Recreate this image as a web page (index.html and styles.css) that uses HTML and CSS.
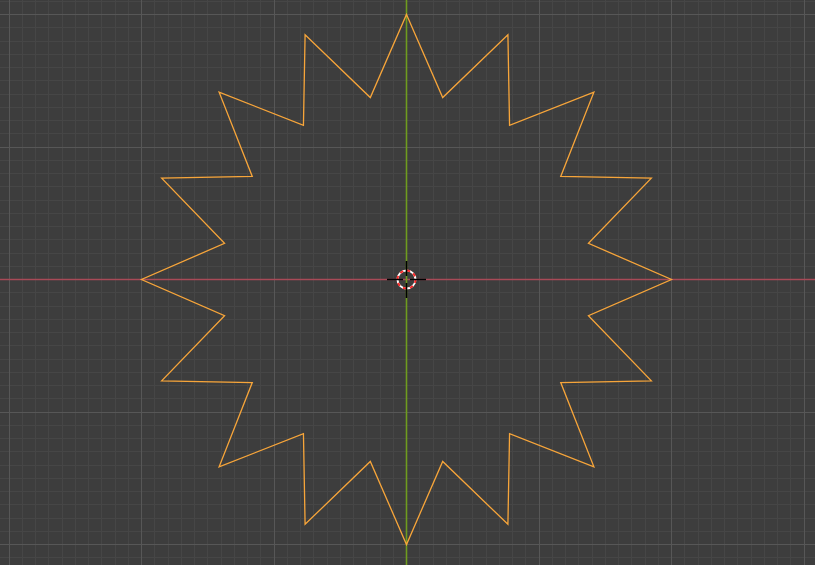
FILE: index.html
```html
<!DOCTYPE html>
<html lang="en">
<head>
<meta charset="utf-8">
<title>Viewport</title>
<link rel="stylesheet" href="styles.css">
</head>
<body>
<div class="viewport">
  <svg class="canvas" width="815" height="565" viewBox="0 0 815 565" xmlns="http://www.w3.org/2000/svg">
    <!-- minor grid -->
    <path class="grid-minor" d="
      M22.5 0V565 M35.5 0V565 M48.5 0V565 M62.5 0V565 M75.5 0V565 M88.5 0V565 M101.5 0V565 M115.5 0V565 M128.5 0V565
      M154.5 0V565 M168.5 0V565 M181.5 0V565 M194.5 0V565 M207.5 0V565 M221.5 0V565 M234.5 0V565 M247.5 0V565 M260.5 0V565
      M287.5 0V565 M300.5 0V565 M313.5 0V565 M327.5 0V565 M340.5 0V565 M353.5 0V565 M366.5 0V565 M380.5 0V565 M393.5 0V565
      M419.5 0V565 M433.5 0V565 M446.5 0V565 M459.5 0V565 M472.5 0V565 M486.5 0V565 M499.5 0V565 M512.5 0V565 M525.5 0V565
      M552.5 0V565 M565.5 0V565 M578.5 0V565 M592.5 0V565 M605.5 0V565 M618.5 0V565 M631.5 0V565 M645.5 0V565 M658.5 0V565
      M684.5 0V565 M698.5 0V565 M711.5 0V565 M724.5 0V565 M737.5 0V565 M751.5 0V565 M764.5 0V565 M777.5 0V565 M790.5 0V565
      M0 1.5H815 M0 27.5H815 M0 41.5H815 M0 54.5H815 M0 67.5H815 M0 80.5H815 M0 94.5H815 M0 107.5H815 M0 120.5H815 M0 133.5H815
      M0 160.5H815 M0 173.5H815 M0 186.5H815 M0 200.5H815 M0 213.5H815 M0 226.5H815 M0 239.5H815 M0 253.5H815 M0 266.5H815
      M0 292.5H815 M0 306.5H815 M0 319.5H815 M0 332.5H815 M0 345.5H815 M0 359.5H815 M0 372.5H815 M0 385.5H815 M0 398.5H815
      M0 425.5H815 M0 438.5H815 M0 451.5H815 M0 465.5H815 M0 478.5H815 M0 491.5H815 M0 504.5H815 M0 518.5H815 M0 531.5H815
      M0 557.5H815"/>
    <!-- major grid -->
    <path class="grid-major" d="
      M9.5 0V565 M141.5 0V565 M274.5 0V565 M539.5 0V565 M671.5 0V565 M804.5 0V565
      M0 14.5H815 M0 147.5H815 M0 412.5H815 M0 544.5H815"/>
    <!-- axes -->
    <path class="axis-x" d="M0 279.5H815"/>
    <path class="axis-y" d="M406.5 0V565"/>
    <!-- star outline -->
    <polygon class="star" points="
      406.5,14.5 442.69,97.56 507.91,34.67 509.56,125.26 593.88,92.12 560.74,176.44
      651.33,178.09 588.44,243.31 671.5,279.5 588.44,315.69 651.33,380.91 560.74,382.56
      593.88,466.88 509.56,433.74 507.91,524.33 442.69,461.44 406.5,544.5 370.31,461.44
      305.09,524.33 303.44,433.74 219.12,466.88 252.26,382.56 161.67,380.91 224.56,315.69
      141.5,279.5 224.56,243.31 161.67,178.09 252.26,176.44 219.12,92.12 303.44,125.26
      305.09,34.67 370.31,97.56"/>
    <!-- 3D cursor -->
    <circle class="cursor-ring" cx="406.5" cy="279.5" r="9"/>
    <circle class="cursor-dash" cx="406.5" cy="279.5" r="9"/>
    <path class="cursor-cross" d="M387 279.5H403 M410 279.5H426 M406.5 261V276 M406.5 283V298"/>
  </svg>
</div>
</body>
</html>
```

FILE: styles.css
```css
html, body {
  margin: 0;
  padding: 0;
  background: #3d3d3d;
  overflow: hidden;
}

.viewport {
  width: 815px;
  height: 565px;
  background: #3d3d3d;
}

.canvas {
  display: block;
}

.grid-minor {
  fill: none;
  stroke: #464646;
  stroke-width: 1;
  shape-rendering: crispEdges;
}

.grid-major {
  fill: none;
  stroke: #575757;
  stroke-width: 1;
  shape-rendering: crispEdges;
}

.axis-x {
  fill: none;
  stroke: #a84a57;
  stroke-width: 1.6;
}

.axis-y {
  fill: none;
  stroke: #6f9c1f;
  stroke-width: 1.6;
}

.star {
  fill: none;
  stroke: #f7a53a;
  stroke-width: 1.3;
  stroke-linejoin: miter;
  stroke-miterlimit: 10;
}

.cursor-ring {
  fill: none;
  stroke: #ffffff;
  stroke-width: 2;
}

.cursor-dash {
  fill: none;
  stroke: #ff2a2a;
  stroke-width: 2;
  stroke-dasharray: 3.534 3.534;
}

.cursor-cross {
  fill: none;
  stroke: #000000;
  stroke-width: 1.6;
}
```
